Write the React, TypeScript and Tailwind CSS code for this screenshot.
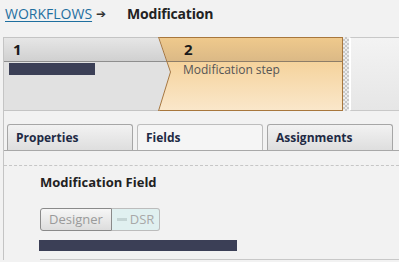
import React from 'react';

const font = { fontFamily: '"Open Sans", "Noto Sans", sans-serif' };

const tabs = [
  { name: 'Properties', active: false },
  { name: 'Fields', active: true },
  { name: 'Assignments', active: false },
];

const App: React.FC = () => {
  return (
    <div className="w-[399px] h-[262px] overflow-hidden bg-[#f2f2f2] text-[#222]" style={font}>
      {/* Breadcrumb */}
      <div className="flex items-center h-[27px] pl-[5px] text-[14px] leading-[20px]">
        <a href="#" className="text-[#1f6f9f] underline decoration-1 underline-offset-2">WORKFLOWS</a>
        <span className="ml-[4px] text-[#333] text-[12px]">➔</span>
        <span className="ml-[21px] font-bold tracking-[-0.2px] text-[#222]">Modification</span>
      </div>

      {/* Steps */}
      <div className="mt-[10px] ml-[3px] flex h-[74px] border-l border-[#c4c4c4]">
        {/* Step 1 */}
        <div className="relative z-10 w-[167px] shrink-0 flex flex-col [clip-path:polygon(0_0,calc(100%_-_12px)_0,100%_47%,calc(100%_-_12px)_100%,0_100%)]">
          <div className="h-[24px] border-t border-[#c4c4c4] bg-gradient-to-b from-[#e6e6e6] to-[#d0d0d0] pl-[9px] text-[15px] font-bold leading-[23px] text-[#1a1a1a]">
            1
          </div>
          <div className="h-px bg-[#8e8e8e]" />
          <div className="flex-1 bg-[#e1e1e1] border-b border-[#c4c4c4] pt-[1px] pl-[5px]">
            <div className="h-[12px] w-[86px] bg-[#3b3f56]" />
          </div>
        </div>

        {/* Step 2 */}
        <div className="relative -ml-[12px] w-[184px] shrink-0 flex flex-col border-y border-r border-[#a8773d]">
          <div className="h-[23px] bg-gradient-to-b from-[#efc98c] to-[#dbb986] pl-[25px] text-[15px] font-bold leading-[23px] text-[#1a1a1a]">
            2
          </div>
          <div className="h-px bg-[#8d7d68]" />
          <div className="flex-1 bg-gradient-to-b from-[#f5d39c] to-[#fae7ca] pl-[24px] text-[12px] leading-[16px] text-[#555]">
            Modification step
          </div>
          <svg className="absolute -left-px -top-px z-20" width="14" height="74" viewBox="0 0 14 74">
            <polyline points="0.5,0 12.5,35 0.5,74" fill="none" stroke="#a8773d" strokeWidth="1" />
          </svg>
        </div>

        {/* Hatch */}
        <div className="w-[6px] shrink-0 bg-[repeating-conic-gradient(#c8c8c8_0_25%,#ececec_0_50%)] bg-[length:4px_4px]" />

        {/* Empty step */}
        <div className="flex-1 border-l-2 border-white border-y border-y-[#c8c8c8] bg-gradient-to-b from-[#f3f3f3] to-[#e6e6e6]" />
      </div>

      {/* Content */}
      <div className="ml-[3px] border-l border-[#c4c4c4] pt-[13px]">
        <div className="flex gap-[4px] pl-[3px] border-b border-[#a8a8a8]">
          {tabs.map((t) => (
            <div
              key={t.name}
              className={`w-[126px] h-[26px] rounded-t-[3px] border border-b-0 pl-[8px] text-[12px] font-bold leading-[25px] text-[#1e2a44] ${
                t.active
                  ? 'bg-[#f5f5f5] border-[#bdbdbd]'
                  : 'bg-gradient-to-b from-[#f2f2f2] to-[#dedede] border-[#a6a6a6]'
              }`}
            >
              {t.name}
            </div>
          ))}
        </div>
        <div className="mt-[14px] border-t border-dashed border-[#c6c6c6]" />

        <div className="pl-[36px] pt-[7px]">
          <div className="text-[13px] font-bold leading-[18px] text-[#222]">Modification Field</div>

          <div className="mt-[17px] flex h-[23px] text-[13px] leading-[21px]">
            <div className="w-[72px] rounded-l-[3px] border border-[#8a8a8a] bg-gradient-to-b from-[#f6f6f6] to-[#dddddd] text-center text-[#9a9a9a]">
              Designer
            </div>
            <div className="flex w-[48px] items-center justify-center gap-[3px] rounded-r-[3px] border border-l-0 border-[#bcbcbc] bg-[#e0f0f0] text-[#a8a8a8]">
              <span className="inline-block h-[3px] w-[10px] bg-[#c4d4d4]" />
              DSR
            </div>
          </div>

          <div className="mt-[9px] -ml-[1px] h-[11px] w-[198px] bg-[#3b3f56]" />
          <div className="mt-[8px] border-t border-[#c8c8c8]" />
        </div>
      </div>
    </div>
  );
};

export default App;
